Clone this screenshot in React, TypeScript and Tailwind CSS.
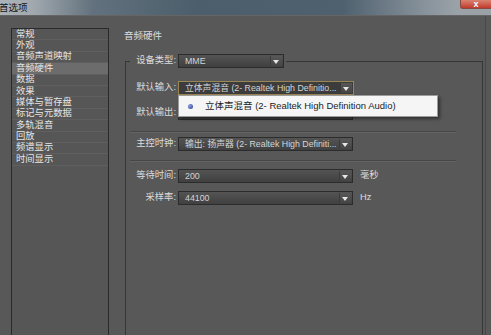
const items = [
  '常规',
  '外观',
  '音频声道映射',
  '音频硬件',
  '数据',
  '效果',
  '媒体与暂存盘',
  '标记与元数据',
  '多轨混音',
  '回放',
  '频谱显示',
  '时间显示',
]

function Combo({ text, width, focused }: { text: string; width: string; focused?: boolean }) {
  return (
    <div
      className={`relative flex h-[14px] shrink-0 items-center overflow-hidden whitespace-nowrap border pl-[6px] pr-[16px] text-[8.8px] leading-none text-[#d4d4d4] ${width} ${
        focused
          ? 'border-[#9a8652] bg-[#3c3c3c]'
          : 'border-[#2c2c2c] bg-gradient-to-b from-[#545454] to-[#404040]'
      }`}
    >
      <span>{text}</span>
      <span className="absolute right-[1px] top-[1px] bottom-[1px] w-[12px] border-l border-[#3a3a3a] bg-gradient-to-b from-[#575757] to-[#454545]" />
      <span className="absolute right-[4px] top-[5px] border-x-[3px] border-t-[4px] border-x-transparent border-t-[#e6e6e6]" />
    </div>
  )
}

function Row({ label, children, className }: { label: string; children: React.ReactNode; className: string }) {
  return (
    <div className={`flex items-center ${className}`}>
      <span className="w-[50px] text-right text-[9.3px] leading-none text-[#dcdcdc]">{label}</span>
      <div className="ml-[2px] flex items-center">{children}</div>
    </div>
  )
}

export default function App() {
  return (
    <div className="flex h-[335px] w-[491px] flex-col overflow-hidden bg-[#585858] font-['Liberation_Sans','Noto_Sans_CJK_SC',sans-serif]">
      {/* Title bar */}
      <div className="relative flex h-[15px] shrink-0 items-center bg-[linear-gradient(to_right,#adb4ba_0%,#a0a8ae_7%,#62717d_19%,#4c5e6c_40%,#4f616f_70%,#86919a_86%,#9aa2a8_93%)]">
        <span className="-ml-[1px] text-[9.5px] leading-none text-[#151515]">首选项</span>
        <div className="absolute right-0 top-0 flex h-[9px] w-[31px] items-center justify-center rounded-bl-[3px] border-b border-l border-[#8a4a44] bg-gradient-to-b from-[#d98272] to-[#c1392b]">
          <span className="text-[9px] font-bold leading-none text-white">x</span>
        </div>
      </div>

      {/* Body */}
      <div className="flex flex-1 border-t border-[#656565]">
        {/* Category list */}
        <div className="pl-[11px] pt-[12px]">
          <div className="h-[400px] w-[98px] border border-[#2a2a2a] bg-[#565656]">
            {items.map(item => (
              <div
                key={item}
                className={`flex h-[11.4px] items-center border-b border-[#5f5f5f] pl-[4px] text-[9.3px] leading-none text-[#e6e6e6] ${
                  item === '音频硬件' ? 'bg-[#6c6c6c]' : ''
                }`}
              >
                {item}
              </div>
            ))}
          </div>
        </div>

        {/* Settings panel */}
        <div className="flex flex-col pl-[16px] pt-[14px]">
          <div className="-ml-[1px] h-[11px] text-[9.5px] leading-[11px] text-[#dedede]">音频硬件</div>

          <fieldset className="mt-[13px] h-[400px] w-[358px] border border-[#363636]">
            <legend className="ml-[4px] flex items-center px-[2px]">
              <span className="w-[44px] text-right text-[9.3px] leading-none text-[#dcdcdc]">设备类型:</span>
              <div className="ml-[2px]">
                <Combo text="MME" width="w-[106px]" />
              </div>
            </legend>

            <Row label="默认输入:" className="mt-[13px]">
              <div className="relative">
                <Combo text="立体声混音 (2- Realtek High Definitio..." width="w-[176px]" focused />
                <div className="absolute left-0 top-[14px] z-10 flex h-[22px] w-[260px] items-center border border-[#9c9c9c] bg-[#f5f5f5] shadow-[2px_2px_3px_rgba(0,0,0,0.45)]">
                  <span className="ml-[9px] h-[5px] w-[5px] rounded-full bg-[radial-gradient(circle_at_35%_35%,#8aa0e0,#22388a)]" />
                  <span className="ml-[12px] whitespace-nowrap text-[9.5px] leading-none text-[#1c1c1c]">
                    立体声混音 (2- Realtek High Definition Audio)
                  </span>
                </div>
              </div>
            </Row>

            <Row label="默认输出:" className="mt-[11px]">
              <Combo text="" width="w-[175px]" />
            </Row>

            <div className="ml-[4px] mt-[11px] w-[326px] border-t border-b border-t-[#464646] border-b-[#646464]" />

            <Row label="主控时钟:" className="mt-[4px]">
              <Combo text="输出: 扬声器 (2- Realtek High Definiti..." width="w-[175px]" />
            </Row>

            <div className="ml-[4px] mt-[9px] w-[326px] border-t border-b border-t-[#464646] border-b-[#646464]" />

            <Row label="等待时间:" className="mt-[7px]">
              <Combo text="200" width="w-[175px]" />
              <span className="ml-[7px] text-[9.3px] leading-none text-[#dcdcdc]">毫秒</span>
            </Row>

            <Row label="采样率:" className="mt-[8px]">
              <Combo text="44100" width="w-[175px]" />
              <span className="ml-[7px] text-[9.3px] leading-none text-[#dcdcdc]">Hz</span>
            </Row>
          </fieldset>
        </div>

        {/* Window edge */}
        <div className="ml-[2px] w-px bg-[#474747]" />
      </div>
    </div>
  )
}
